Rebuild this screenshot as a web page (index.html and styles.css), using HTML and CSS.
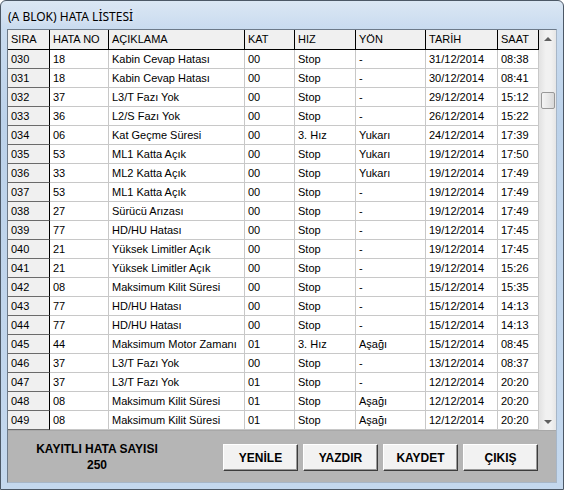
FILE: index.html
```html
<!DOCTYPE html>
<html lang="tr">
<head>
<meta charset="utf-8">
<title>(A BLOK) HATA LİSTESİ</title>
<link rel="stylesheet" href="styles.css">
</head>
<body>
<div class="window">
  <div class="titlebar"><span class="title">(A BLOK) HATA LİSTESİ</span></div>
  <div class="client">
    <div class="gridwrap">
      <div class="grid">
        <div class="row head">
          <div class="c fx">SIRA</div><div class="c">HATA NO</div><div class="c">AÇIKLAMA</div><div class="c">KAT</div><div class="c">HIZ</div><div class="c">YÖN</div><div class="c">TARİH</div><div class="c">SAAT</div>
        </div>
        <div class="row"><div class="c fx">030</div><div class="c">18</div><div class="c">Kabin Cevap Hatası</div><div class="c">00</div><div class="c">Stop</div><div class="c">-</div><div class="c">31/12/2014</div><div class="c">08:38</div></div>
        <div class="row"><div class="c fx">031</div><div class="c">18</div><div class="c">Kabin Cevap Hatası</div><div class="c">00</div><div class="c">Stop</div><div class="c">-</div><div class="c">30/12/2014</div><div class="c">08:41</div></div>
        <div class="row"><div class="c fx">032</div><div class="c">37</div><div class="c">L3/T Fazı Yok</div><div class="c">00</div><div class="c">Stop</div><div class="c">-</div><div class="c">29/12/2014</div><div class="c">15:12</div></div>
        <div class="row"><div class="c fx">033</div><div class="c">36</div><div class="c">L2/S Fazı Yok</div><div class="c">00</div><div class="c">Stop</div><div class="c">-</div><div class="c">26/12/2014</div><div class="c">15:22</div></div>
        <div class="row"><div class="c fx">034</div><div class="c">06</div><div class="c">Kat Geçme Süresi</div><div class="c">00</div><div class="c">3. Hız</div><div class="c">Yukarı</div><div class="c">24/12/2014</div><div class="c">17:39</div></div>
        <div class="row"><div class="c fx">035</div><div class="c">53</div><div class="c">ML1 Katta Açık</div><div class="c">00</div><div class="c">Stop</div><div class="c">Yukarı</div><div class="c">19/12/2014</div><div class="c">17:50</div></div>
        <div class="row"><div class="c fx">036</div><div class="c">33</div><div class="c">ML2 Katta Açık</div><div class="c">00</div><div class="c">Stop</div><div class="c">Yukarı</div><div class="c">19/12/2014</div><div class="c">17:49</div></div>
        <div class="row"><div class="c fx">037</div><div class="c">53</div><div class="c">ML1 Katta Açık</div><div class="c">00</div><div class="c">Stop</div><div class="c">-</div><div class="c">19/12/2014</div><div class="c">17:49</div></div>
        <div class="row"><div class="c fx">038</div><div class="c">27</div><div class="c">Sürücü Arızası</div><div class="c">00</div><div class="c">Stop</div><div class="c">-</div><div class="c">19/12/2014</div><div class="c">17:49</div></div>
        <div class="row"><div class="c fx">039</div><div class="c">77</div><div class="c">HD/HU Hatası</div><div class="c">00</div><div class="c">Stop</div><div class="c">-</div><div class="c">19/12/2014</div><div class="c">17:45</div></div>
        <div class="row"><div class="c fx">040</div><div class="c">21</div><div class="c">Yüksek Limitler Açık</div><div class="c">00</div><div class="c">Stop</div><div class="c">-</div><div class="c">19/12/2014</div><div class="c">17:45</div></div>
        <div class="row"><div class="c fx">041</div><div class="c">21</div><div class="c">Yüksek Limitler Açık</div><div class="c">00</div><div class="c">Stop</div><div class="c">-</div><div class="c">19/12/2014</div><div class="c">15:26</div></div>
        <div class="row"><div class="c fx">042</div><div class="c">08</div><div class="c">Maksimum Kilit Süresi</div><div class="c">00</div><div class="c">Stop</div><div class="c">-</div><div class="c">15/12/2014</div><div class="c">15:35</div></div>
        <div class="row"><div class="c fx">043</div><div class="c">77</div><div class="c">HD/HU Hatası</div><div class="c">00</div><div class="c">Stop</div><div class="c">-</div><div class="c">15/12/2014</div><div class="c">14:13</div></div>
        <div class="row"><div class="c fx">044</div><div class="c">77</div><div class="c">HD/HU Hatası</div><div class="c">00</div><div class="c">Stop</div><div class="c">-</div><div class="c">15/12/2014</div><div class="c">14:13</div></div>
        <div class="row"><div class="c fx">045</div><div class="c">44</div><div class="c">Maksimum Motor Zamanı</div><div class="c">01</div><div class="c">3. Hız</div><div class="c">Aşağı</div><div class="c">15/12/2014</div><div class="c">08:45</div></div>
        <div class="row"><div class="c fx">046</div><div class="c">37</div><div class="c">L3/T Fazı Yok</div><div class="c">00</div><div class="c">Stop</div><div class="c">-</div><div class="c">13/12/2014</div><div class="c">08:37</div></div>
        <div class="row"><div class="c fx">047</div><div class="c">37</div><div class="c">L3/T Fazı Yok</div><div class="c">01</div><div class="c">Stop</div><div class="c">-</div><div class="c">12/12/2014</div><div class="c">20:20</div></div>
        <div class="row"><div class="c fx">048</div><div class="c">08</div><div class="c">Maksimum Kilit Süresi</div><div class="c">01</div><div class="c">Stop</div><div class="c">Aşağı</div><div class="c">12/12/2014</div><div class="c">20:20</div></div>
        <div class="row"><div class="c fx">049</div><div class="c">08</div><div class="c">Maksimum Kilit Süresi</div><div class="c">01</div><div class="c">Stop</div><div class="c">Aşağı</div><div class="c">12/12/2014</div><div class="c">20:20</div></div>
      </div>
      <div class="vscroll">
        <div class="sbtn"><span class="tri up"></span></div>
        <div class="track"><div class="thumb"></div></div>
        <div class="sbtn"><span class="tri down"></span></div>
      </div>
    </div>
    <div class="panel">
      <div class="count"><div>KAYITLI HATA SAYISI</div><div>250</div></div>
      <div class="buttons">
        <button class="btn">YENİLE</button>
        <button class="btn">YAZDIR</button>
        <button class="btn">KAYDET</button>
        <button class="btn">ÇIKIŞ</button>
      </div>
    </div>
  </div>
</div>
</body>
</html>
```
FILE: styles.css
```css
html, body {
  margin: 0;
  padding: 0;
  background: #ffffff;
}
.window {
  box-sizing: border-box;
  width: 564px;
  height: 490px;
  border: 1px solid #4c5866;
  border-radius: 6px 6px 0 0;
  background: linear-gradient(180deg, #dbe7f4 0px, #c9dbef 28px, #bcd2ea 120px, #c4d8ee 490px);
  padding: 0 6px 6px 6px;
  display: flex;
  flex-direction: column;
  font-family: "Liberation Sans", Arial, sans-serif;
}
.titlebar {
  height: 28px;
  display: flex;
  align-items: center;
  padding-left: 1px;
}
.title {
  font-family: "Noto Sans", "DejaVu Sans", sans-serif;
  font-size: 12px;
  color: #000;
  padding-top: 2px;
  text-shadow: 0 0 6px rgba(255,255,255,0.9);
}
.client {
  border: 1px solid #6d7a89;
  border-color: #6d7a89 #a7b6c7 #a7b6c7 #6d7a89;
  display: flex;
  flex-direction: column;
  background: #b5b5b5;
}
.gridwrap {
  display: flex;
  height: 400px;
  background: #fff;
}
.grid {
  width: 531px;
  display: flex;
  flex-direction: column;
}
.row {
  display: grid;
  grid-template-columns: 42px 59px 136px 50px 61px 70px 72px 41px;
  height: 19px;
}
.row.head {
  height: 20px;
}
.c {
  box-sizing: border-box;
  border-right: 1px solid #c8c8c8;
  border-bottom: 1px solid #c8c8c8;
  font-size: 11px;
  line-height: 18px;
  padding-left: 3px;
  color: #000;
  white-space: nowrap;
  overflow: hidden;
}
.c.fx {
  background: #f0f0f0;
  border-right-color: #000;
  border-bottom-color: #6a6a6a;
}
.head .c {
  background: #f0f0f0;
  border-right-color: #000;
  border-bottom-color: #000;
  line-height: 19px;
}
.vscroll {
  width: 17px;
  display: flex;
  flex-direction: column;
  background: linear-gradient(90deg, #e2e2e2, #f1f1f1 40%, #f1f1f1 70%, #e6e6e6);
}
.sbtn {
  height: 17px;
  display: flex;
  align-items: center;
  justify-content: center;
}
.tri {
  width: 0;
  height: 0;
  border-left: 4px solid transparent;
  border-right: 4px solid transparent;
}
.tri.up {
  border-bottom: 4px solid #606060;
}
.tri.down {
  border-top: 4px solid #606060;
}
.track {
  flex: 1;
  padding: 45px 1px 0 2px;
}
.thumb {
  height: 15px;
  border: 1px solid #989898;
  border-radius: 2px;
  background: linear-gradient(90deg, #f4f4f4, #e8e8e8 50%, #d8d8d8);
}
.panel {
  height: 52px;
  box-sizing: border-box;
  padding-top: 10px;
  display: flex;
  align-items: flex-start;
  border-top: 1px solid #a8a8a8;
}
.count {
  width: 178px;
  text-align: center;
  font-weight: bold;
  font-size: 12px;
  line-height: 16px;
  color: #000;
}
.buttons {
  margin-left: 37px;
  margin-top: 3px;
  display: flex;
  gap: 5px;
}
.btn {
  box-sizing: border-box;
  width: 75px;
  height: 27px;
  margin: 0;
  padding: 0;
  background: #f2f2f2;
  border: 1px solid;
  border-color: #ffffff #3c3c3c #3c3c3c #ffffff;
  box-shadow: inset -1px -1px 0 #9a9a9a;
  font-family: "Liberation Sans", Arial, sans-serif;
  font-weight: bold;
  font-size: 12px;
  color: #000;
}
```
